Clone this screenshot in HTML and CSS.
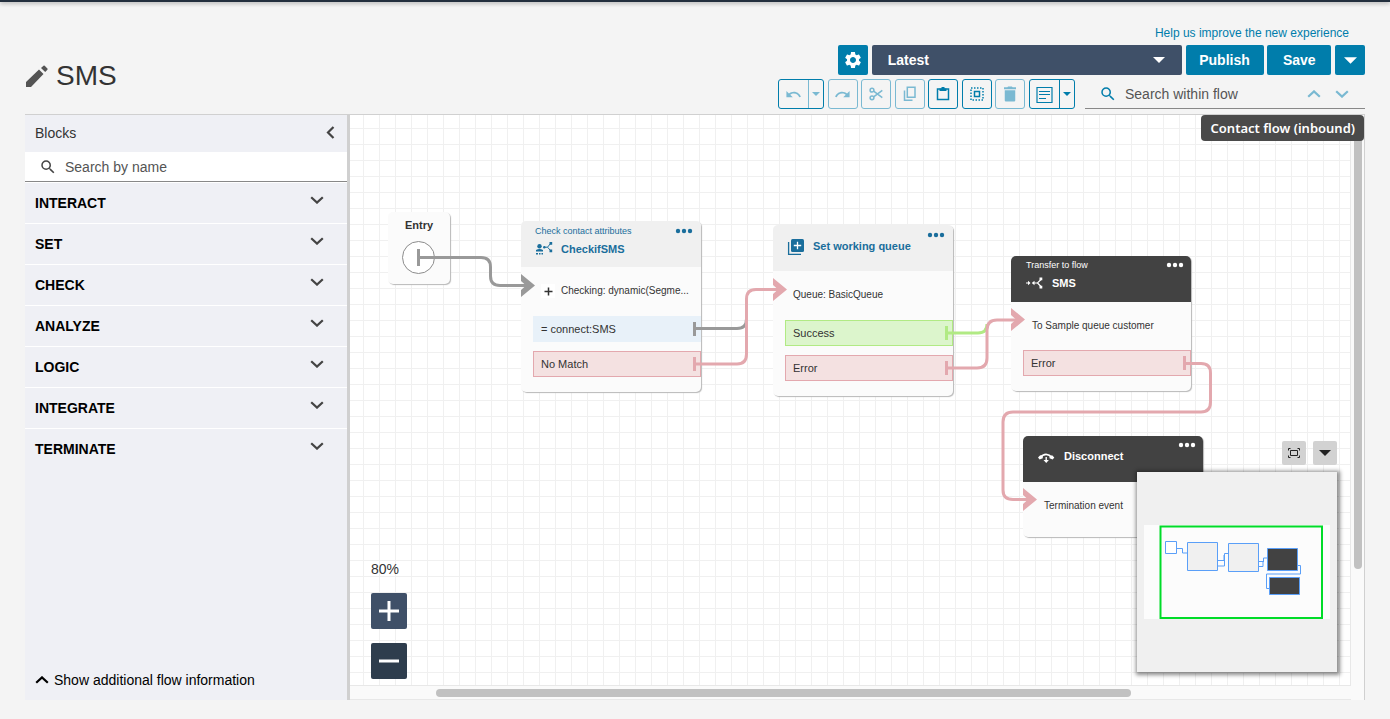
FILE: index.html
```html
<!DOCTYPE html>
<html lang="en">
<head>
<meta charset="utf-8">
<title>SMS - Contact flow</title>
<link rel="stylesheet" href="styles.css">
</head>
<body>
<svg class="sprite" aria-hidden="true">
  <symbol id="i-search" viewBox="0 0 24 24"><path d="M15.5 14h-.79l-.28-.27A6.471 6.471 0 0016 9.5 6.5 6.5 0 109.5 16c1.61 0 3.09-.59 4.23-1.57l.27.28v.79l5 4.99L20.49 19l-4.99-5zm-6 0C7.01 14 5 11.99 5 9.5S7.01 5 9.5 5 14 7.01 14 9.5 11.99 14 9.5 14z"/></symbol>
  <symbol id="i-down" viewBox="0 0 14 8"><path d="M1.2 1.2 7 6.6l5.800-5.400" fill="none" stroke="currentColor" stroke-width="2.2"/></symbol>
  <symbol id="i-up" viewBox="0 0 14 8"><path d="M1.200 6.800 7 1.400l5.800 5.400" fill="none" stroke="currentColor" stroke-width="2.2"/></symbol>
  <symbol id="i-caret" viewBox="0 0 12 6"><path d="M0 0h12L6 6z"/></symbol>
  <symbol id="i-dots" viewBox="0 0 18 6"><circle cx="3" cy="3" r="2.200"/><circle cx="9" cy="3" r="2.200"/><circle cx="15" cy="3" r="2.200"/></symbol>
</svg>
<div class="topbar"></div>
<div class="page">
  <header class="header">
    <h1 class="title">
      <svg class="title-icon" viewBox="0 0 22 22"><path d="M0 22v-5L13 4.500l4.500 4.500L5 22zM15 3l2.500-2.300q.6-.4 1.200.1l2.700 2.700q.5.600 0 1.200L19.200 7z"/></svg>
      <span>SMS</span>
    </h1>
    <div class="controls">
      <a class="feedback" href="#">Help us improve the new experience</a>
      <div class="actions">
        <button class="btn btn-square" aria-label="Settings"><svg width="20" height="20" viewBox="0 0 24 24"><path d="M19.140 12.940c.04-.3.06-.61.06-.94 0-.32-.02-.64-.07-.94l2.030-1.580c.18-.14.23-.41.12-.61l-1.920-3.320c-.12-.22-.37-.29-.59-.22l-2.390.96c-.5-.38-1.030-.7-1.620-.94l-.36-2.540c-.04-.24-.24-.41-.48-.41h-3.840c-.24 0-.43.17-.47.41l-.36 2.540c-.59.24-1.130.57-1.620.94l-2.390-.96c-.22-.08-.47 0-.59.22L2.740 8.870c-.12.21-.08.47.12.61l2.030 1.580c-.05.3-.09.63-.09.94s.02.64.07.94l-2.030 1.580c-.18.14-.23.41-.12.61l1.920 3.320c.12.22.37.29.59.22l2.390-.96c.5.38 1.030.7 1.620.94l.36 2.540c.05.24.24.41.48.41h3.840c.24 0 .44-.17.47-.41l.36-2.540c.59-.24 1.130-.56 1.620-.94l2.390.96c.22.080.47 0 .59-.22l1.920-3.320c.12-.22.07-.47-.12-.61l-2.010-1.580zM12 15.600c-1.980 0-3.600-1.620-3.600-3.600s1.620-3.600 3.600-3.600 3.600 1.620 3.600 3.600-1.620 3.600-3.600 3.600z"/></svg></button>
        <div class="version">
          <select class="version-select" aria-label="Version"><option>Latest</option></select>
          <svg class="version-caret" width="12" height="6"><use href="#i-caret"/></svg>
        </div>
        <button class="btn btn-publish">Publish</button>
        <button class="btn btn-save">Save</button>
        <button class="btn btn-square" aria-label="More save options"><svg width="13" height="7"><use href="#i-caret"/></svg></button>
      </div>
      <div class="tools-row">
        <div class="tools">
          <div class="split">
            <button class="split-main faded" aria-label="Undo"><svg width="17" height="17" viewBox="0 0 24 24"><path d="M12.500 8c-2.650 0-5.050.99-6.900 2.600L2 7v9h9l-3.620-3.620c1.390-1.160 3.160-1.880 5.120-1.880 3.540 0 6.550 2.310 7.600 5.500l2.370-.78C21.080 11.030 17.150 8 12.500 8z"/></svg></button>
            <button class="split-more faded" aria-label="Undo history"><svg width="8" height="4"><use href="#i-caret"/></svg></button>
          </div>
          <button class="tool faded" aria-label="Redo"><svg width="17" height="17" viewBox="0 0 24 24"><path d="M18.400 10.600C16.550 8.990 14.150 8 11.500 8c-4.650 0-8.580 3.030-9.960 7.220L3.900 16c1.050-3.190 4.050-5.500 7.600-5.500 1.950 0 3.730.72 5.120 1.880L13 16h9V7l-3.600 3.600z"/></svg></button>
          <button class="tool faded" aria-label="Cut"><svg class="line" width="14" height="14" viewBox="0 0 14 14"><circle cx="3" cy="3.200" r="1.900"/><circle cx="3" cy="10.800" r="1.900"/><path d="M4.600 4.200 13.300 10.600M4.600 9.800 13.300 3.400"/></svg></button>
          <button class="tool faded" aria-label="Copy"><svg class="line" width="14" height="16" viewBox="0 0 14 16"><path d="M4.300 1.300h7.700v10h-7.700zM1.500 4.500v9.800h8"/></svg></button>
          <button class="tool" aria-label="Paste"><svg class="line" width="14" height="16" viewBox="0 0 14 16"><path d="M1.500 3h11v10.500h-11z"/><path d="M3.500 2.500h7V5h-7zM5.500 1h3v2h-3z" fill="currentColor" stroke="none"/></svg></button>
          <button class="tool" aria-label="Select all"><svg class="line" width="14" height="14" viewBox="0 0 14 14"><path d="M4.500 4.500h5v5h-5z"/><path d="M1 1h12v12H1z" stroke-dasharray="1.500 1.500"/></svg></button>
          <button class="tool faded" aria-label="Delete"><svg width="18" height="18" viewBox="0 0 24 24"><path d="M5 20.500q0 1.500 1.500 1.500h11q1.500 0 1.500-1.500V7H5zM20 3h-4.500l-1-1h-5l-1 1H4v2.500h16z"/></svg></button>
          <div class="split">
            <button class="split-main" aria-label="Notes"><svg class="line" width="17" height="17" viewBox="0 0 17 17"><path d="M1 1.500h15v15H1zM3 5.500h11M3 8.500h11M3 12.500h7" stroke-width="1.200"/></svg></button>
            <button class="split-more" aria-label="More note actions"><svg width="8" height="4"><use href="#i-caret"/></svg></button>
          </div>
        </div>
        <div class="flow-search">
          <svg class="flow-search-icon" width="18" height="18"><use href="#i-search"/></svg>
          <input class="field" type="text" placeholder="Search within flow" aria-label="Search within flow">
          <button class="step" aria-label="Previous result"><svg width="14" height="8"><use href="#i-up"/></svg></button>
          <button class="step" aria-label="Next result"><svg width="14" height="8"><use href="#i-down"/></svg></button>
        </div>
      </div>
    </div>
  </header>

  <main class="workspace">
    <aside class="sidebar">
      <div class="sidebar-head">
        <h2 class="sidebar-title">Blocks</h2>
        <button class="collapse" aria-label="Collapse blocks"><svg width="9" height="13" viewBox="0 0 9 13"><path d="M7.500 1 2 6.500 7.500 12" fill="none" stroke="currentColor" stroke-width="2.200"/></svg></button>
      </div>
      <div class="block-search">
        <svg width="18" height="18"><use href="#i-search"/></svg>
        <input class="field" type="text" placeholder="Search by name" aria-label="Search by name">
      </div>
      <nav class="groups">
        <button class="group">INTERACT<svg class="group-icon"><use href="#i-down"/></svg></button>
        <button class="group">SET<svg class="group-icon"><use href="#i-down"/></svg></button>
        <button class="group">CHECK<svg class="group-icon"><use href="#i-down"/></svg></button>
        <button class="group">ANALYZE<svg class="group-icon"><use href="#i-down"/></svg></button>
        <button class="group">LOGIC<svg class="group-icon"><use href="#i-down"/></svg></button>
        <button class="group">INTEGRATE<svg class="group-icon"><use href="#i-down"/></svg></button>
        <button class="group">TERMINATE<svg class="group-icon"><use href="#i-down"/></svg></button>
      </nav>
      <button class="more-info"><svg width="14" height="8"><use href="#i-up"/></svg>Show additional flow information</button>
    </aside>

    <section class="canvas-frame">
      <div class="canvas">
        <article class="node node-entry"><h3 class="entry-title">Entry</h3></article>

        <article class="node node-check">
          <header class="node-head">
            <div class="node-label">
              <p class="node-kind">Check contact attributes</p>
              <h3 class="node-title"><svg class="node-icon" viewBox="0 0 18 18"><circle cx="4.500" cy="6.200" r="2.200"/><path d="M1 11.500V10q3.500-2 7 0v1.500zM1 13h2v1.500H1zM4 13h1.500v1.500H4zM6.500 13H8v1.500H6.500z"/><circle cx="9.300" cy="7.200" r="1.200"/><path d="M9.500 7.200h3l3.300-4M12.500 7.200l3.300 3.600" fill="none" stroke="currentColor"/><path d="M14.500 2h2.700v2.700h-2.700zM14.500 9.500h2.700v2.700h-2.700z"/></svg>CheckifSMS</h3>
            </div>
            <button class="node-menu" aria-label="Block menu"><svg width="18" height="6"><use href="#i-dots"/></svg></button>
          </header>
          <div class="node-summary"><button class="expand" aria-label="Expand"><svg width="9" height="9" viewBox="0 0 9 9"><path d="M4.500.5v8M.5 4.500h8" stroke="currentColor" stroke-width="1.500"/></svg></button><span>Checking: dynamic(Segme...</span></div>
          <ul class="ports"><li class="port port-match">= connect:SMS</li><li class="port port-error">No Match</li></ul>
        </article>

        <article class="node node-queue">
          <header class="node-head">
            <div class="node-label">
              <h3 class="node-title"><svg class="node-icon" viewBox="0 0 18 18"><path d="M1.600 5v12.400H14" fill="none" stroke="currentColor" stroke-width="1.300"/><rect x="4" y="2" width="13" height="13" rx="1.500"/><path d="M10.500 4.800v7.400M6.800 8.500h7.400" stroke="#fff" stroke-width="1.300"/></svg>Set working queue</h3>
            </div>
            <button class="node-menu" aria-label="Block menu"><svg width="18" height="6"><use href="#i-dots"/></svg></button>
          </header>
          <div class="node-summary">Queue: BasicQueue</div>
          <ul class="ports"><li class="port port-success">Success</li><li class="port port-error">Error</li></ul>
        </article>

        <article class="node node-dark node-transfer">
          <header class="node-head">
            <div class="node-label">
              <p class="node-kind">Transfer to flow</p>
              <h3 class="node-title"><svg class="node-icon" viewBox="0 0 18 18"><path d="M0 9h3M7 9h4.500l4-4M11.500 9l4 4" fill="none" stroke="currentColor" stroke-width="1.200"/><path d="M2 6.800 4.500 9 2 11.200zM8.500 6.800v4.400L5.800 9zM13.500 3.500h2.800v2.800h-2.800zM13.500 11.700h2.800v2.800h-2.800z"/></svg>SMS</h3>
            </div>
            <button class="node-menu" aria-label="Block menu"><svg width="18" height="6"><use href="#i-dots"/></svg></button>
          </header>
          <div class="node-summary">To Sample queue customer</div>
          <ul class="ports"><li class="port port-error">Error</li></ul>
        </article>

        <article class="node node-dark node-disconnect">
          <header class="node-head">
            <div class="node-label">
              <h3 class="node-title"><svg class="node-icon" viewBox="0 0 18 18"><path d="M1.800 10.800Q8 4 14.500 10.800" fill="none" stroke="currentColor" stroke-width="1.800"/><path d="M0 10.600 2.200 8.300l2.600 1v2L1.600 12.400zM16.300 10.600 14.100 8.300l-2.600 1v2l3.200 1.100z"/><path d="M7.500 10h1.400v3h2L8.200 16l-2.700-3h2z"/></svg>Disconnect</h3>
            </div>
            <button class="node-menu" aria-label="Block menu"><svg width="18" height="6"><use href="#i-dots"/></svg></button>
          </header>
          <div class="node-summary">Termination event</div>
        </article>

        <svg class="edges" viewBox="350 115 1000 570" aria-hidden="true">
          <circle cx="418.500" cy="257.500" r="16" fill="#fff" stroke="#8c8c8c"/>
          <g class="edge edge-gray">
            <path d="M418.500 249v17M418.500 257.500H481Q490.500 257.500 490.500 267V276Q490.500 285.500 500 285.500H530"/>
            <path class="tip" d="M521 274l14 11.500-14 11.500v-7l5-4.500-5-4.500z"/>
            <path d="M694.500 322v14M694.500 328.500H737Q746.500 328.500 746.500 319V300"/>
          </g>
          <g class="edge edge-green"><path d="M946.500 326v14M946.500 333H978Q987 333 987 324"/></g>
          <g class="edge edge-red">
            <path d="M694.500 357v14M694.500 364H737Q746.500 364 746.500 354V299Q746.500 289.500 756 289.500H782"/>
            <path class="tip" d="M773 278l14 11.500-14 11.500v-7l5-4.500-5-4.500z"/>
            <path d="M946.500 361v14M946.500 368H977Q987 368 987 358V330Q987 320 997 320H1020"/>
            <path class="tip" d="M1011 308l14 11.500-14 11.500v-7l5-4.500-5-4.500z"/>
            <path d="M1184.500 356v14M1184.500 363.500H1201Q1210.500 363.500 1210.500 373V402Q1210.500 412 1201 412H1013Q1003 412 1003 422V490Q1003 499.500 1013 499.500H1032"/>
            <path class="tip" d="M1023 488l14 11.500-14 11.500v-7l5-4.500-5-4.500z"/>
          </g>
        </svg>

        <div class="zoom">
          <span class="zoom-level">80%</span>
          <button class="zoom-btn zoom-in" aria-label="Zoom in"><svg width="20" height="20" viewBox="0 0 20 20"><path d="M10 0v20M0 10h20"/></svg></button>
          <button class="zoom-btn zoom-out" aria-label="Zoom out"><svg width="20" height="20" viewBox="0 0 20 20"><path d="M0 10h20"/></svg></button>
        </div>

        <div class="overview">
          <div class="overview-bar">
            <button class="overview-btn" aria-label="Fit to view"><svg class="fit-icon" width="12" height="10" viewBox="0 0 12 10"><path d="M2.500 2.500h7v5h-7zM.5 2.500v-2h2M9.500.5h2v2M.5 7.500v2h2M9.500 9.500h2v-2"/></svg></button>
            <button class="overview-btn" aria-label="Hide overview"><svg width="12" height="6"><use href="#i-caret"/></svg></button>
          </div>
          <svg class="minimap" viewBox="1137 472 200 200" role="img" aria-label="Flow overview">
            <path d="M1144 525h186v94h-186z" fill="#fcfcfc"/>
            <g fill="#f0f0f0" stroke="#5a9ff8">
              <path d="M1176 548.500h6.500v4.500h5M1217 560.500h7v-5.500M1217 566h7.500v-12.500h4M1258 561.500h5v5h-5M1263.500 562v-4h4M1297 565.500h3.500v8.500h-34v14.500h3" fill="none"/>
              <path d="M1165.500 541.500h11v12h-11z" fill="#fff"/>
              <path d="M1187.500 542.500h30v28h-30zM1228.500 543.500h30v28h-30z"/>
              <path d="M1267.500 548.500h30v22h-30zM1269.500 577.500h30v17h-30z" fill="#424242"/>
            </g>
            <path d="M1160.500 526.500h161.500v91.500h-161.500z" fill="none" stroke="#00dc28" stroke-width="2"/>
          </svg>
        </div>
      </div>
      <div class="track-y"><div class="thumb-y"></div></div>
      <div class="track-x"><div class="thumb-x"></div></div>
      <div class="flow-type">Contact flow (inbound)</div>
    </section>
  </main>
</div>
</body>
</html>
```
FILE: styles.css
```css
* { box-sizing: border-box; }
body {
  margin: 0;
  min-height: 100vh;
  display: flex;
  flex-direction: column;
  background: #f4f4f4;
  color: #333;
  font: 14px/20px "Liberation Sans", Arial, sans-serif;
}
h1, h2, h3, p, ul { margin: 0; padding: 0; font-weight: normal; }
button, input, select { font: inherit; color: inherit; border: 0; padding: 0; margin: 0; background: none; }
button { cursor: pointer; display: flex; align-items: center; justify-content: center; }
svg { display: block; flex: none; fill: currentColor; }
.sprite { position: absolute; width: 0; height: 0; }
.topbar { height: 2px; background: #232f3e; box-shadow: 0 1px 4px rgba(0, 0, 0, .45); }
.page { flex: 1; display: flex; flex-direction: column; padding: 21px 25px 19px; }

/* header */
.header { display: flex; justify-content: space-between; align-items: flex-start; padding-bottom: 5px; }
.title { display: flex; align-items: center; gap: 8px; padding: 37px 0 0 1px; font-size: 28px; line-height: 32px; }
.title-icon { width: 22px; height: 22px; color: #545454; }
.controls { display: flex; flex-direction: column; align-items: flex-end; }
.feedback { margin-right: 16px; font-size: 12px; line-height: 20px; color: #007dab; text-decoration: none; }
.actions { display: flex; justify-content: space-between; width: 527px; margin: 2px 0 4px; }
.btn { height: 30px; border-radius: 2px; background: #007dab; color: #fff; font-weight: bold; }
.btn-square { width: 30px; }
.btn-publish { width: 78px; }
.btn-save { width: 64px; }
.version { position: relative; width: 310px; }
.version-select { width: 100%; height: 30px; padding: 0 16px; border-radius: 2px; background: #3f5068; color: #fff; font-weight: bold; appearance: none; }
.version-caret { position: absolute; right: 17px; top: 12px; color: #fff; pointer-events: none; }

.tools-row { display: flex; gap: 10px; }
.tools { display: flex; justify-content: space-between; width: 297px; }
.tool, .split { height: 30px; border: 1px solid #007dab; border-radius: 3px; color: #007dab; }
.tool { width: 30px; }
.tool.faded { border-color: #7ab9d2; }
.faded { color: #7ab9d2; }
.split { display: flex; width: 46px; }
.split-main { flex: 1; }
.split-more { width: 15px; border-left: 1px solid currentColor; }
.line { fill: none; stroke: currentColor; stroke-width: 1.5px; }
.flow-search { display: flex; align-items: center; width: 280px; height: 30px; padding: 0 16px 0 14px; border-bottom: 1px solid #888; }
.flow-search-icon { color: #007dab; margin-right: 8px; }
.field { flex: 1; min-width: 0; height: 28px; outline: 0; }
.field::placeholder { color: #545454; opacity: 1; }
.step { width: 14px; margin-left: 14px; height: 28px; color: #7ab9d2; }

/* workspace */
.workspace { flex: 1; display: flex; border-top: 1px solid #d0d0d0; }
.sidebar { display: flex; flex-direction: column; width: 325px; flex: none; background: #eff0f5; border-right: 3px solid #d0d0d0; }
.sidebar-head { display: flex; justify-content: space-between; height: 37px; padding: 0 11px 2px 10px; align-items: center; }
.sidebar-title { font-size: 14px; }
.collapse { width: 11px; height: 20px; color: #444; }
.block-search { display: flex; align-items: center; gap: 8px; height: 30px; padding: 0 14px; background: #fff; border-bottom: 1px solid #888; color: #444; }
.groups { flex: 1; }
.group { display: flex; justify-content: space-between; width: 100%; height: 41px; padding: 0 23px 0 10px; border-top: 1px solid #fff; color: #000; font-weight: bold; }
.group-icon { width: 14px; height: 8px; margin-bottom: 6px; color: #444; }
.more-info { gap: 5px; align-self: flex-start; height: 40px; padding-left: 10px; color: #000; }

/* canvas */
.canvas-frame { position: relative; flex: 1; min-width: 0; display: grid; grid-template-columns: minmax(0, 1fr) 13px; grid-template-rows: 1fr 14px; border-right: 1px solid #d0d0d0; background: #fafafa; }
.canvas {
  position: relative;
  overflow: hidden;
  border: solid #e8e8e8;
  border-width: 0 1px 1px 0;
  background: #fff linear-gradient(#f0f0f0 1px, transparent 1px) 0 13px / 16px 16px;
}
.canvas::before { content: ""; position: absolute; inset: 0; background: linear-gradient(90deg, #f0f0f0 1px, transparent 1px) 13px 0 / 16px 16px; }
.track-y { padding-left: 3px; }
.thumb-y { width: 8px; height: 79.5%; border-radius: 4px; background: #c1c1c1; }
.track-x { padding: 3px 0 0 86px; border-bottom: 1px solid #e8e8e8; }
.thumb-x { width: 76%; height: 8px; border-radius: 4px; background: #c1c1c1; }
.flow-type { position: absolute; top: 0; right: 0; height: 26px; padding: 0 9px 0 10px; border-radius: 4px; background: #4a4a4a; color: #fff; font: 600 13px/26px "Noto Sans", sans-serif; }
.edges { position: absolute; left: 0; top: 0; width: 1000px; height: 570px; pointer-events: none; }
.edge { fill: none; stroke: currentColor; stroke-width: 3px; }
.edge-gray { color: #999; }
.edge-red { color: #e3a8ae; }
.edge-green { color: #b1ea84; }
.tip { fill: currentColor; stroke: none; }

/* nodes */
.node { position: absolute; width: 180px; border-radius: 5px; background: #fbfbfb; box-shadow: 1px 1px 1px 0 #b8b8b8; font-size: 11px; line-height: 14px; }
.node-entry { left: 38px; top: 97px; width: 62px; height: 72px; padding-top: 6px; text-align: center; }
.entry-title { font-size: 11px; font-weight: bold; }
.node-check { left: 171px; top: 106px; }
.node-queue { left: 423px; top: 110px; }
.node-transfer { left: 661px; top: 141px; }
.node-disconnect { left: 673px; top: 321px; padding-bottom: 8px; }
.node-head { display: flex; justify-content: space-between; height: 46px; padding: 4px 8px 0 14px; border-radius: 5px 5px 0 0; background: #f0f0f0; color: #1a6e9c; }
.node-dark .node-head { padding: 3px 7px 0 15px; background: #424242; color: #fff; }
.node-kind { font-size: 9px; line-height: 12px; }
.node-title { display: flex; align-items: center; gap: 8px; height: 18px; font-size: 11px; font-weight: bold; }
.node-kind + .node-title { margin-top: 3px; }
.node-title:first-child { margin-top: 8px; }
.node-icon { width: 18px; height: 18px; }
.node-menu { width: 18px; height: 12px; }
.node-summary { display: flex; align-items: center; gap: 6px; height: 48px; padding-left: 20px; font-size: 10px; }
.node-dark .node-summary { height: 47px; padding-left: 21px; }
.expand { width: 14px; height: 14px; background: #fff; }
.ports { display: flex; flex-direction: column; gap: 9px; padding: 1px 0 15px 12px; list-style: none; }
.port { height: 26px; padding-left: 7px; border: 1px solid; line-height: 24px; }
.port-match { background: #e8f1f9; border-color: #e8f1f9; }
.port-error { background: #f4e1e1; border-color: #e3a8ae; }
.port-success { background: #dcf5cc; border-color: #b1ea84; }

/* zoom and overview */
.zoom { position: absolute; left: 21px; bottom: 6px; display: flex; flex-direction: column; }
.zoom-level { margin-bottom: 14px; }
.zoom-btn { width: 36px; height: 36px; border-radius: 2px; }
.zoom-btn svg { stroke: #fff; stroke-width: 3px; }
.zoom-in { margin-bottom: 14px; background: #3f5068; }
.zoom-out { background: #2e3d4d; }
.overview { position: absolute; right: 13px; bottom: 13px; display: flex; flex-direction: column; align-items: flex-end; gap: 7px; }
.overview-bar { display: flex; gap: 7px; }
.overview-btn { width: 24px; height: 24px; border-radius: 2px; background: #d2d2d2; color: #222; }
.fit-icon { fill: none; stroke: currentColor; }
.minimap { width: 200px; height: 200px; background: #f0f0f0; box-shadow: 1px 1px 4px 2px rgba(0, 0, 0, .45); }
```
